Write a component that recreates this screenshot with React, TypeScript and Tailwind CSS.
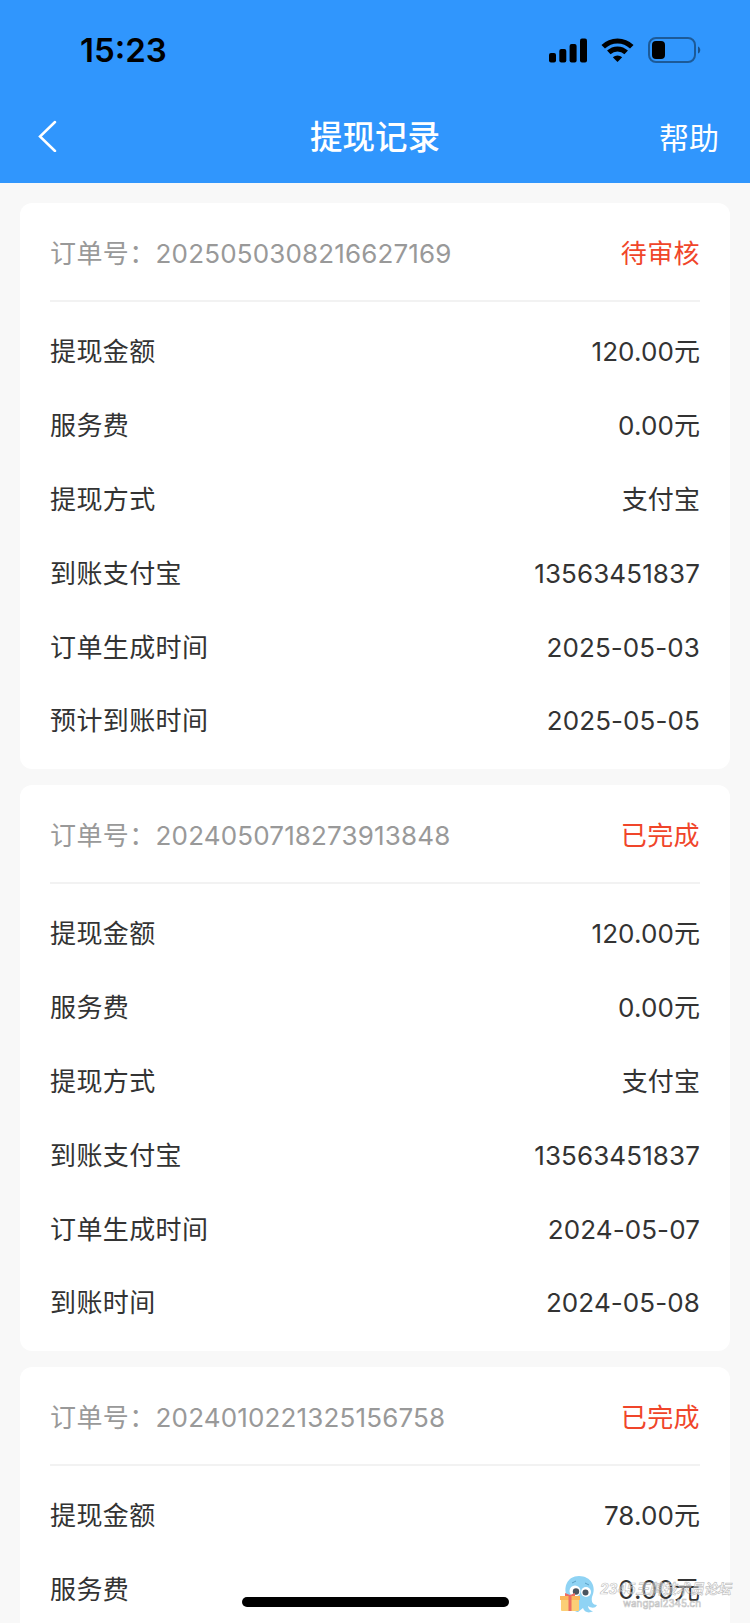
import type { ReactNode } from 'react'

interface RecordRow {
  label: string
  value: string
}

interface WithdrawRecord {
  orderNo: string
  status: string
  rows: RecordRow[]
}

const records: WithdrawRecord[] = [
  {
    orderNo: '2025050308216627169',
    status: '待审核',
    rows: [
      { label: '提现金额', value: '120.00元' },
      { label: '服务费', value: '0.00元' },
      { label: '提现方式', value: '支付宝' },
      { label: '到账支付宝', value: '13563451837' },
      { label: '订单生成时间', value: '2025-05-03' },
      { label: '预计到账时间', value: '2025-05-05' },
    ],
  },
  {
    orderNo: '2024050718273913848',
    status: '已完成',
    rows: [
      { label: '提现金额', value: '120.00元' },
      { label: '服务费', value: '0.00元' },
      { label: '提现方式', value: '支付宝' },
      { label: '到账支付宝', value: '13563451837' },
      { label: '订单生成时间', value: '2024-05-07' },
      { label: '到账时间', value: '2024-05-08' },
    ],
  },
  {
    orderNo: '2024010221325156758',
    status: '已完成',
    rows: [
      { label: '提现金额', value: '78.00元' },
      { label: '服务费', value: '0.00元' },
    ],
  },
]

function StatusBar() {
  return (
    <div className="flex h-[100px] items-center justify-between pl-20 pr-[48px] text-black">
      <span className="text-[33px] leading-none font-semibold">15:23</span>
      <div className="flex items-center">
        <svg width="38" height="26" viewBox="0 0 38 26" fill="currentColor">
          <rect x="0" y="16" width="7" height="9.5" rx="2" />
          <rect x="10.3" y="12" width="7" height="13.5" rx="2" />
          <rect x="20.6" y="7" width="7" height="18.5" rx="2" />
          <rect x="31" y="1.5" width="7" height="24" rx="2" />
        </svg>
        <svg className="ml-[14px]" width="33" height="26" viewBox="0 0 33 26" fill="none" stroke="currentColor" strokeWidth="5">
          <path d="M2.2 9.8a20.4 20.4 0 0 1 28.6 0" />
          <path d="M7.8 15.4a12.5 12.5 0 0 1 17.4 0" />
          <path d="M16.5 25l-4.7-4.8a7 7 0 0 1 9.4 0z" fill="currentColor" stroke="none" />
        </svg>
        <svg className="ml-[14px]" width="54" height="26" viewBox="0 0 54 26">
          <rect x="1" y="1" width="46" height="24" rx="7" fill="none" stroke="currentColor" strokeOpacity="0.4" strokeWidth="2" />
          <rect x="4" y="4" width="13" height="18" rx="4" fill="currentColor" />
          <path d="M50 9.5c3 1 3 6 0 7z" fill="currentColor" fillOpacity="0.45" />
        </svg>
      </div>
    </div>
  )
}

function NavBar() {
  return (
    <div className="grid h-[83px] grid-cols-3 items-start px-[31px] pt-[13px] text-white">
      <svg className="mt-[7px] ml-1.5" width="20" height="32" viewBox="0 0 20 32" fill="none" stroke="currentColor" strokeWidth="2.5" strokeLinecap="round">
        <path d="M18 2L3 16.500L18 31" />
      </svg>
      <h1 className="text-center text-[32.500px] leading-[50px] font-medium">提现记录</h1>
      <span className="text-right text-[30px] leading-[50px]">帮助</span>
    </div>
  )
}

function Line({ children }: { children: ReactNode }) {
  return <div className="flex h-[73.8px] items-center justify-between">{children}</div>
}

function RecordCard({ record }: { record: WithdrawRecord }) {
  return (
    <section className="h-[566px] shrink-0 rounded-xl bg-white px-[30px] text-[26px] tracking-[0.4px] text-[#333]">
      <div className="flex h-[99px] items-center justify-between border-b-2 border-[#f2f2f2] pt-[3px]">
        <span className="text-[#999]">
          订单号：<span className="tracking-[0.15px]">{record.orderNo}</span>
        </span>
        <span className="text-[#f0452a]">{record.status}</span>
      </div>
      <div className="pt-[13px]">
        {record.rows.map((row) => (
          <Line key={row.label}>
            <span>{row.label}</span>
            <span className="tracking-[0.1px]">{row.value}</span>
          </Line>
        ))}
      </div>
    </section>
  )
}

function Mascot() {
  return (
    <svg width="40" height="40" viewBox="0 0 40 40">
      <path d="M10 25C4 14 9 2 21 2s18 11 13 21c-1 5 1 8 5 8-2 4-6 3-9 1 0 3 3 5 5 5-4 3-9 1-10-3l-5 4c-4 0-8-5-10-13z" fill="#8fd3f4" />
      <circle cx="17" cy="17" r="5.500" fill="#fff" />
      <circle cx="28" cy="18" r="5" fill="#fff" />
      <circle cx="18" cy="17.500" r="3.200" fill="#4a5560" />
      <circle cx="27.500" cy="18.500" r="3" fill="#4a5560" />
      <path d="M14 9l4-2M27 9l4 2" stroke="#5b9fc4" strokeWidth="1" />
      <rect x="3" y="24" width="18" height="13" rx="1" fill="#fbcf76" />
      <path d="M2 22h20v4H2z" fill="#fbb75c" />
      <path d="M10.500 22h3v15h-3zM7 19l5 2 5-2v3H7z" fill="#ec6d63" />
    </svg>
  )
}

export default function App() {
  return (
    <div className="relative flex h-[1623px] w-[750px] flex-col overflow-hidden bg-[#f8f8f8] font-['Inter','Noto_Sans_CJK_SC',sans-serif]">
      <header className="shrink-0 bg-[#3096fd]">
        <StatusBar />
        <NavBar />
      </header>
      <main className="flex flex-col gap-4 px-5 pt-5">
        {records.map((record) => (
          <RecordCard key={record.orderNo} record={record} />
        ))}
      </main>

      {/* Forum watermark */}
      <div className="absolute top-[1574px] left-[558px] flex">
        <Mascot />
        <svg width="140" height="44" viewBox="0 0 140 44" fill="#fff" fillOpacity="0.35" stroke="#b8b8b8" strokeOpacity="0.85" strokeWidth="0.7">
          <text x="2" y="20" fontSize="14" fontStyle="italic" fontWeight="700" textLength="131" lengthAdjust="spacingAndGlyphs">2345王牌技术员论坛</text>
          <text x="25" y="33" fontSize="10.500" textLength="78" lengthAdjust="spacingAndGlyphs">wangpai2345.cn</text>
        </svg>
      </div>

      {/* Home indicator */}
      <div className="absolute bottom-[16px] left-[242px] h-[10px] w-[267px] rounded-full bg-black" />
    </div>
  )
}
